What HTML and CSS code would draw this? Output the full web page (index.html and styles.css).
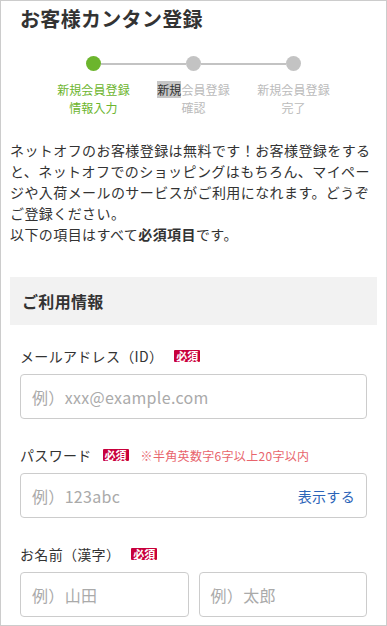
FILE: index.html
```html
<!DOCTYPE html>
<html lang="ja">
<head>
<meta charset="utf-8">
<title>お客様カンタン登録</title>
<link rel="stylesheet" href="styles.css">
</head>
<body>
<div class="page">
  <h1 class="title">お客様カンタン登録</h1>

  <div class="steps">
    <div class="track">
      <span class="dot dot-on"></span>
      <span class="seg"></span>
      <span class="dot"></span>
      <span class="seg"></span>
      <span class="dot"></span>
    </div>
    <div class="labels">
      <div class="label label-on">新規会員登録<br>情報入力</div>
      <div class="label"><span class="sel">新規</span>会員登録<br>確認</div>
      <div class="label">新規会員登録<br>完了</div>
    </div>
  </div>

  <p class="intro">ネットオフのお客様登録は無料です！お客様登録をすると、ネットオフでのショッピングはもちろん、マイページや入荷メールのサービスがご利用になれます。どうぞご登録ください。<br>以下の項目はすべて<strong>必須項目</strong>です。</p>

  <h2 class="section">ご利用情報</h2>

  <div class="form">
    <div class="group">
      <div class="field-label">メールアドレス（ID）<span class="req">必須</span></div>
      <div class="input"><span class="ph">例）xxx@example.com</span></div>
    </div>
    <div class="group">
      <div class="field-label">パスワード<span class="req">必須</span><span class="note">※半角英数字6字以上20字以内</span></div>
      <div class="input input-split"><span class="ph">例）123abc</span><span class="show">表示する</span></div>
    </div>
    <div class="group">
      <div class="field-label">お名前（漢字）<span class="req">必須</span></div>
      <div class="pair">
        <div class="input"><span class="ph">例）山田</span></div>
        <div class="input"><span class="ph">例）太郎</span></div>
      </div>
    </div>
  </div>
</div>
</body>
</html>
```

FILE: styles.css
```css
* { box-sizing: border-box; }
html, body { margin: 0; padding: 0; background: #fff; }
body {
  font-family: "Noto Sans CJK JP", "Noto Sans", sans-serif;
  color: #333;
  letter-spacing: 0.02em;
}
.page {
  width: 387px;
  height: 626px;
  overflow: hidden;
  border: 1px solid #cccccc;
  padding: 4px 9px 0 9px;
}
.title {
  margin: 0;
  padding: 0 10px;
  font-size: 20px;
  line-height: 28px;
  font-weight: 700;
  color: #333;
}
.steps {
  margin-top: 23px;
}
.track {
  display: flex;
  align-items: center;
  justify-content: center;
  height: 15px;
}
.dot {
  width: 15px;
  height: 15px;
  border-radius: 50%;
  background: #c3c3c3;
  flex: none;
}
.dot-on { background: #6cb52d; }
.seg {
  width: 85px;
  height: 2px;
  background: #c3c3c3;
  flex: none;
}
.labels {
  display: flex;
  justify-content: center;
  margin-top: 10px;
}
.label {
  width: 100px;
  text-align: center;
  font-size: 12px;
  line-height: 18px;
  color: #bbbbbb;
  letter-spacing: 0.01em;
}
.label-on { color: #6cb52d; }
.sel {
  background: #c6c6c6;
  color: #333;
}
.intro {
  margin: 23px 0 0 0;
  font-size: 14px;
  line-height: 21px;
  letter-spacing: 0.03em;
  color: #333;
}
.intro strong { font-weight: 700; }
.section {
  margin: 32px 0 0 0;
  height: 48px;
  padding: 0 12px;
  display: flex;
  align-items: center;
  background: #f2f2f2;
  font-size: 16px;
  font-weight: 700;
  color: #333;
}
.form {
  padding: 21px 10px 0 10px;
}
.group {
  margin-bottom: 26px;
}
.field-label {
  display: flex;
  align-items: center;
  height: 20px;
  font-size: 14px;
  color: #333;
  margin-bottom: 8px;
}
.req {
  margin-left: 11px;
  padding: 0 2px;
  background: #c8003c;
  color: #fff;
  font-size: 11px;
  line-height: 12px;
  font-weight: 700;
  border-radius: 1px;
  letter-spacing: 0;
}
.note {
  margin-left: 12px;
  font-size: 12px;
  color: #e8646c;
}
.input {
  height: 45px;
  border: 1px solid #cccccc;
  border-radius: 4px;
  padding: 0 11px;
  display: flex;
  align-items: center;
  font-size: 16px;
}
.input-split { justify-content: space-between; }
.ph { color: #aaaaaa; }
.show {
  font-size: 14px;
  color: #2b64b8;
}
.pair {
  display: grid;
  grid-template-columns: 1fr 1fr;
  gap: 10px;
}
```
